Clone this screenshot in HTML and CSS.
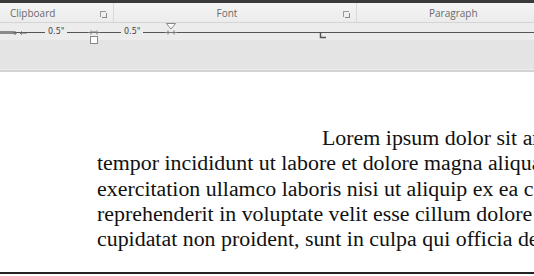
FILE: index.html
```html
<!DOCTYPE html>
<html>
<head>
<meta charset="utf-8">
<link rel="stylesheet" href="styles.css">
</head>
<body>
<div class="app">
  <div class="topbar"></div>
  <div class="groups">
    <div class="group g1"><span class="glabel">Clipboard</span><span class="launcher"></span></div>
    <div class="group g2"><span class="glabel">Font</span><span class="launcher"></span></div>
    <div class="group g3"><span class="glabel">Paragraph</span></div>
  </div>
  <div class="ruler">
    <div class="rline"></div>
    <div class="rdark"></div>
    <svg class="mk tick0" width="14" height="6" viewBox="0 0 14 6"><path d="M0 3 H4 M2 1 V5 M7 3 H14 M7 3 L9 1.5 M7 3 L9 4.5" fill="none" stroke="#666" stroke-width="1"/></svg>
    <span class="rnum n1">0.5"</span>
    <span class="rnum n2">0.5"</span>
    <svg class="mk hang" width="12" height="22" viewBox="0 0 12 22"><path d="M0 9.5 H12 M3 7.5 V11.5 M9 7.5 V11.5 M4 9.5 L5.5 8 M8 9.5 L6.5 8" fill="none" stroke="#777" stroke-width="1"/><rect x="2.5" y="13.5" width="7" height="7" fill="#fff" stroke="#888"/></svg>
    <svg class="mk first" width="14" height="14" viewBox="0 0 14 14"><path d="M2.5 0.5 L11.5 0.5 L7 6 Z" fill="#fff" stroke="#888"/><path d="M1 9.5 H13 M4 7.5 V11.5 M10 7.5 V11.5" fill="none" stroke="#777" stroke-width="1"/></svg>
    <svg class="mk tab" width="8" height="8" viewBox="0 0 8 8"><path d="M1.5 0 L1.5 5.5 L7 5.5" fill="none" stroke="#555" stroke-width="1.5"/></svg>
  </div>
  <div class="graybar"></div>
  <div class="page">
    <div class="line first">Lorem ipsum dolor sit amet, consectetur</div>
    <div class="line">tempor incididunt ut labore et dolore magna aliqua. Ut enim</div>
    <div class="line">exercitation ullamco laboris nisi ut aliquip ex ea commodo</div>
    <div class="line">reprehenderit in voluptate velit esse cillum dolore eu fugiat</div>
    <div class="line">cupidatat non proident, sunt in culpa qui officia deserunt</div>
  </div>
  <div class="bottom"></div>
</div>
</body>
</html>
```
FILE: styles.css
```css
* { box-sizing: border-box; }
html, body { margin: 0; padding: 0; background: #fff; overflow: hidden; }
.app { width: 534px; height: 276px; display: flex; flex-direction: column; overflow: hidden; background: #fff; }
.topbar { height: 3px; background: #3a3a3a; flex: none; }
.groups { height: 20px; flex: none; display: flex; background: linear-gradient(#f4f4f4, #ececec); border-bottom: 1px solid #d4d4d4; font-family: "Open Sans", "DejaVu Sans", sans-serif; font-size: 10px; color: #6a6a6a; }
.group { position: relative; display: flex; align-items: center; border-right: 1px solid #dadada; }
.g1 { width: 114px; padding-left: 10px; }
.g2 { width: 243px; justify-content: center; padding-right: 16px; }
.g3 { flex: 1; border-right: none; padding-left: 72px; }
.launcher { position: absolute; right: 7px; top: 8px; width: 6px; height: 6px; border-left: 1px solid #999; border-top: 1px solid #999; }
.launcher::after { content: ""; position: absolute; left: 1px; top: 1px; width: 4px; height: 4px; border-right: 1px solid #888; border-bottom: 1px solid #888; }
.ruler { position: relative; height: 17px; flex: none; background: #ececec; }
.rline { position: absolute; left: 0; right: 0; top: 9px; height: 1px; background: #555; }
.rdark { position: absolute; left: 0; width: 14px; top: 8px; height: 3px; background: #8a8a8a; }
.rnum { position: absolute; top: 3px; font-family: "DejaVu Sans", sans-serif; font-size: 8px; color: #444; background: #ececec; padding: 0 3px; line-height: 11px; }
.n1 { left: 45px; }
.n2 { left: 121px; }
.mk { position: absolute; }
.tick0 { left: 13px; top: 6.5px; }
.hang { left: 88px; top: 0px; }
.first { left: 164px; top: 0px; }
.tab { left: 319px; top: 9px; }
.graybar { height: 32px; flex: none; background: #e4e4e4; border-bottom: 2px solid #d3d3d3; box-shadow: inset 0 -7px 0 -6px #ececec; }
.page { height: 200px; flex: none; background: #fff; padding: 53px 0 0 97px; font-family: "Liberation Serif", "Times New Roman", serif; font-size: 21.9px; line-height: 25.3px; color: #111; }
.line { white-space: nowrap; overflow: hidden; }
.line.first { padding-left: 225px; }
.bottom { height: 2px; background: #222; flex: none; }
```
